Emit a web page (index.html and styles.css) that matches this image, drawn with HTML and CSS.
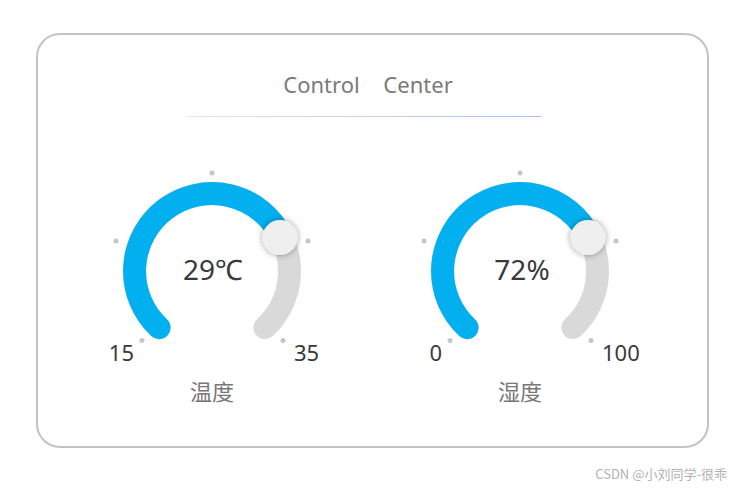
FILE: index.html
```html
<!DOCTYPE html>
<html lang="zh">
<head>
<meta charset="utf-8">
<title>Control Center</title>
<link rel="stylesheet" href="styles.css">
</head>
<body>
<div class="card">
  <div class="content">
    <h1 class="title">Control Center</h1>
    <div class="divider"></div>
    <div class="gauges">
      <div class="gauge">
        <svg class="dial" width="240" height="205" viewBox="0 0 240 205">
          <defs>
            <filter id="knobShadow" x="-50%" y="-50%" width="200%" height="200%">
              <feDropShadow dx="0" dy="0" stdDeviation="3" flood-color="#000" flood-opacity="0.4"/>
            </filter>
          </defs>
          <circle class="tick" cx="120" cy="8" r="2.5"/>
          <circle class="tick" cx="24" cy="76" r="2.5"/>
          <circle class="tick" cx="216" cy="76" r="2.5"/>
          <circle class="tick" cx="50" cy="175.5" r="2.5"/>
          <circle class="tick" cx="191" cy="175.5" r="2.5"/>
          <path class="track" d="M 67.1 162.7 A 77.5 77.5 0 1 1 172.9 162.7"/>
          <path class="progress" d="M 67.1 162.7 A 77.5 77.5 0 1 1 189.3 71.3"/>
          <circle class="knob" cx="188" cy="72.5" r="17.5" filter="url(#knobShadow)"/>
          <text class="value" x="121" y="114.5" text-anchor="middle">29℃</text>
          <text class="limit" x="42" y="196" text-anchor="end">15</text>
          <text class="limit" x="202" y="196" text-anchor="start">35</text>
        </svg>
        <div class="label">温度</div>
      </div>
      <div class="gauge">
        <svg class="dial" width="240" height="205" viewBox="0 0 240 205">
          <circle class="tick" cx="120" cy="8" r="2.5"/>
          <circle class="tick" cx="24" cy="76" r="2.5"/>
          <circle class="tick" cx="216" cy="76" r="2.5"/>
          <circle class="tick" cx="50" cy="175.5" r="2.5"/>
          <circle class="tick" cx="191" cy="175.5" r="2.5"/>
          <path class="track" d="M 67.1 162.7 A 77.5 77.5 0 1 1 172.9 162.7"/>
          <path class="progress" d="M 67.1 162.7 A 77.5 77.5 0 1 1 189.3 71.3"/>
          <circle class="knob" cx="188" cy="72.5" r="17.5" filter="url(#knobShadow)"/>
          <text class="value" x="122" y="114.5" text-anchor="middle">72%</text>
          <text class="limit" x="42" y="196" text-anchor="end">0</text>
          <text class="limit" x="202" y="196" text-anchor="start">100</text>
        </svg>
        <div class="label">湿度</div>
      </div>
    </div>
  </div>
</div>
<div class="watermark">CSDN @小刘同学-很乖</div>
</body>
</html>
```
FILE: styles.css
```css
html, body {
  margin: 0;
  padding: 0;
  background: #ffffff;
}

body {
  font-family: "Noto Sans", "Open Sans", "Noto Sans CJK SC", sans-serif;
  width: 736px;
  height: 488px;
  overflow: hidden;
}

.card {
  box-sizing: border-box;
  width: 673px;
  height: 415px;
  margin: 33px 0 0 36px;
  border: 2px solid #c3c3c3;
  border-radius: 24px;
  background: #fff;
}

.content {
  display: flex;
  flex-direction: column;
  align-items: center;
  padding-right: 13px;
}

.title {
  margin: 38px 0 0 4px;
  font-size: 22px;
  line-height: 22px;
  font-weight: 400;
  color: #7a7a7a;
  word-spacing: 18px;
}

.divider {
  width: 354px;
  height: 1px;
  margin-top: 21px;
  margin-right: 4px;
  background: linear-gradient(to right, #e3e7ec, #a6c3ee);
}

.gauges {
  display: flex;
  gap: 68px;
  margin-top: 48px;
}

.gauge {
  display: flex;
  flex-direction: column;
  align-items: center;
  width: 240px;
}

.dial {
  display: block;
}

.tick {
  fill: #c6c6c6;
}

.track {
  fill: none;
  stroke: #d9d9d9;
  stroke-width: 23;
  stroke-linecap: round;
}

.progress {
  fill: none;
  stroke: #02b0ef;
  stroke-width: 23;
  stroke-linecap: round;
}

.knob {
  fill: #efefef;
}

.value {
  font-family: "Noto Sans", "Open Sans", sans-serif;
  font-size: 28px;
  fill: #3a3a3a;
}

.limit {
  font-family: "Noto Sans", "Open Sans", sans-serif;
  font-size: 22px;
  fill: #3a3a3a;
}

.label {
  margin-top: 8px;
  font-family: "Noto Sans CJK SC", sans-serif;
  font-size: 22px;
  line-height: 24px;
  color: #777777;
}

.watermark {
  margin-top: 18px;
  padding-right: 9px;
  text-align: right;
  font-family: "Noto Sans CJK SC", sans-serif;
  font-size: 13px;
  line-height: 16px;
  color: #b2b2b2;
}
```
